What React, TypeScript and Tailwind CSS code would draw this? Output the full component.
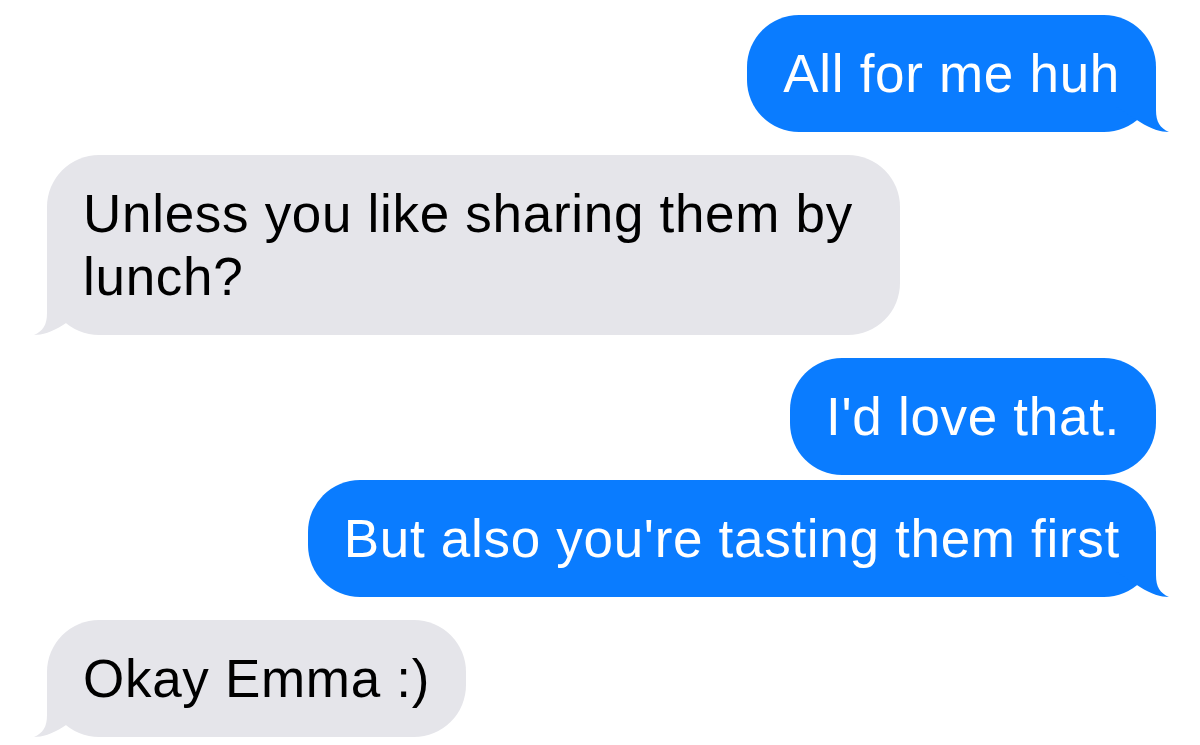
import React from "react";

interface Message {
  id: number;
  text: string;
  fromMe: boolean;
  tail: boolean;
}

const MESSAGES: Message[] = [
  { id: 1, text: "All for me huh", fromMe: true, tail: true },
  { id: 2, text: "Unless you like sharing them by lunch?", fromMe: false, tail: true },
  { id: 3, text: "I'd love that.", fromMe: true, tail: false },
  { id: 4, text: "But also you're tasting them first", fromMe: true, tail: true },
  { id: 5, text: "Okay Emma :)", fromMe: false, tail: true },
];

// the little curl under the last bubble of a group
function Tail({ fromMe }: { fromMe: boolean }) {
  return (
    <svg
      viewBox="0 0 56 56"
      className={`absolute bottom-0 w-[56px] h-[56px] ${fromMe ? "right-[-15px] fill-[#0a7cff]" : "left-[-15px] -scale-x-100 fill-[#e5e5ea]"}`}
    >
      <path d="M41 0 L41 34 C41 46 45 52 54 56 C46 56 36 53 25 46 L0 30 L0 0 Z" />
    </svg>
  );
}

export default function App() {
  return (
    <div className="w-[1200px] h-[745px] bg-white overflow-hidden pt-[15px] pl-[47px] pr-[44px] flex flex-col font-['Liberation_Sans',Arial,sans-serif]">
      {MESSAGES.map((m, idx) => {
        const prev = MESSAGES[idx - 1];
        const sameGroup = prev && prev.fromMe === m.fromMe;
        return (
          <div
            key={m.id}
            className={`flex ${m.fromMe ? "justify-end" : "justify-start"} ${idx === 0 ? "" : sameGroup ? "mt-[5px]" : "mt-[23px]"}`}
          >
            <div
              className={`relative max-w-[853px] rounded-[52px] px-[36px] py-[27px] text-[53px] leading-[63px] tracking-[0.7px] ${
                m.fromMe ? "bg-[#0a7cff] text-white" : "bg-[#e5e5ea] text-black"
              }`}
            >
              {m.tail && <Tail fromMe={m.fromMe} />}
              <span className="relative">{m.text}</span>
            </div>
          </div>
        );
      })}
    </div>
  );
}
